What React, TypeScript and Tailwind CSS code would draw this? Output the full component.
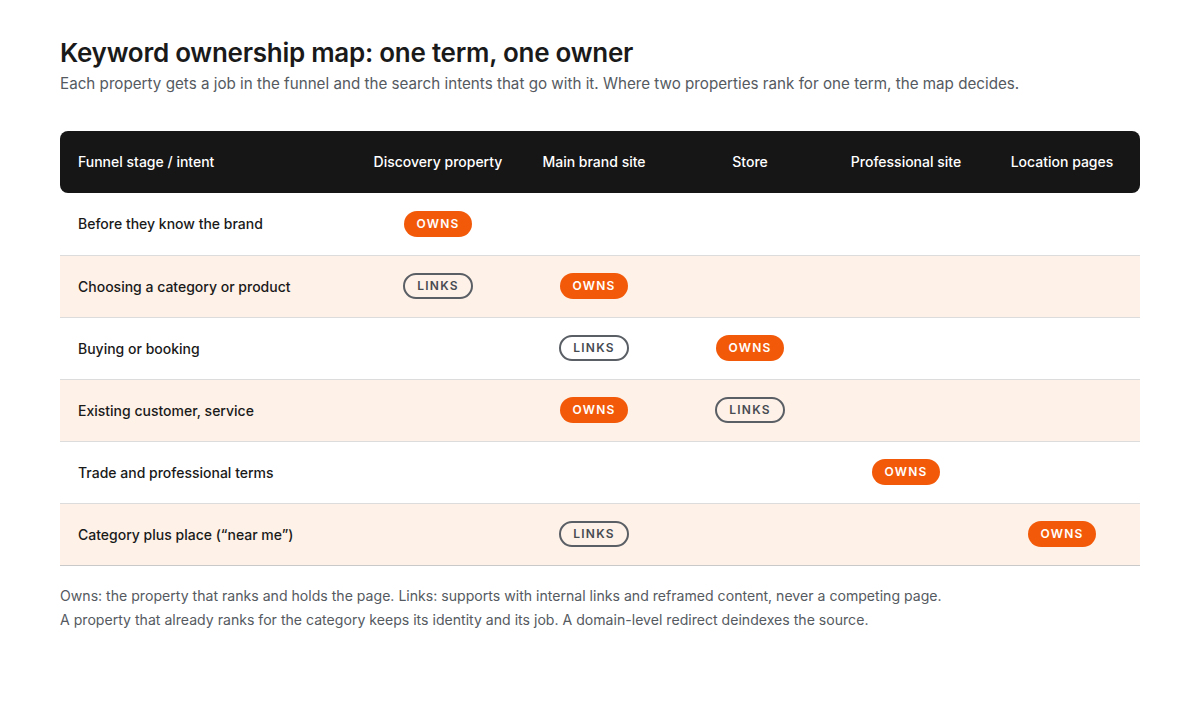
const cols = ["Discovery property", "Main brand site", "Store", "Professional site", "Location pages"];

type Cell = "" | "O" | "L";

const rows: { label: string; cells: Cell[] }[] = [
  { label: "Before they know the brand", cells: ["O", "", "", "", ""] },
  { label: "Choosing a category or product", cells: ["L", "O", "", "", ""] },
  { label: "Buying or booking", cells: ["", "L", "O", "", ""] },
  { label: "Existing customer, service", cells: ["", "O", "L", "", ""] },
  { label: "Trade and professional terms", cells: ["", "", "", "O", ""] },
  { label: "Category plus place (\u201cnear me\u201d)", cells: ["", "L", "", "", "O"] },
];

const Pill = ({ kind }: { kind: Cell }) => {
  if (kind === "O")
    return (
      <span className="inline-flex items-center justify-center h-[26px] w-[68px] rounded-full bg-[#f25a0a] text-white text-[12px] font-semibold tracking-[0.1em]">
        OWNS
      </span>
    );
  if (kind === "L")
    return (
      <span className="inline-flex items-center justify-center h-[26px] w-[70px] rounded-full border-[2px] border-[#5a5f66] text-[#474b52] text-[12px] font-semibold tracking-[0.1em]">
        LINKS
      </span>
    );
  return null;
};

export default function App() {
  return (
    <div className="min-h-[720px] bg-white px-[60px] pt-[36px] text-[#1a1a1a]" style={{ fontFamily: "Inter, 'Noto Sans', sans-serif" }}>
      <h1 className="text-[26px] font-semibold leading-[34px] tracking-[-0.01em]">Keyword ownership map: one term, one owner</h1>
      <p className="text-[15.2px] text-[#555a61] mt-[3px]">
        Each property gets a job in the funnel and the search intents that go with it. Where two properties rank for one term, the map decides.
      </p>

      <div className="mt-[35px] border-b border-[#c9c9c9]">
        {/* header */}
        <div className="flex h-[62px] items-center bg-[#161616] text-white rounded-[8px] text-[14px] font-medium">
          <div className="w-[300px] pl-[18px]">Funnel stage / intent</div>
          {cols.map((c) => (
            <div key={c} className="w-[156px] text-center">{c}</div>
          ))}
        </div>

        {rows.map((r, i) => (
          <div
            key={r.label}
            className={`flex h-[62px] items-center text-[14px] font-medium ${i % 2 ? "bg-[#fef1e7]" : "bg-white"} ${i > 0 ? "border-t border-[#dcdcdc]" : ""}`}
          >
            <div className="w-[300px] pl-[18px]">{r.label}</div>
            {r.cells.map((c, j) => (
              <div key={j} className="w-[156px] flex justify-center">
                <Pill kind={c} />
              </div>
            ))}
          </div>
        ))}
      </div>

      <div className="mt-[18px] text-[14.1px] leading-[24px] text-[#555a61]">
        <p>Owns: the property that ranks and holds the page. Links: supports with internal links and reframed content, never a competing page.</p>
        <p>A property that already ranks for the category keeps its identity and its job. A domain-level redirect deindexes the source.</p>
      </div>
    </div>
  );
}
